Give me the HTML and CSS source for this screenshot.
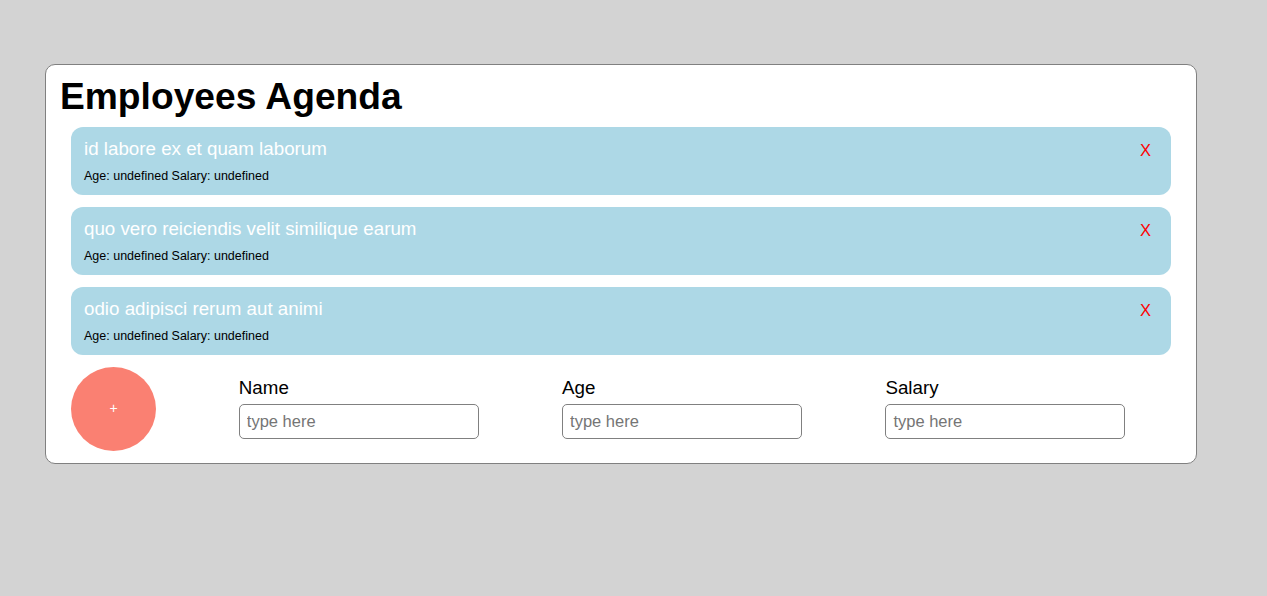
FILE: index.html
```html
<!DOCTYPE html>
<html>
<head>
<meta charset="utf-8">
<link rel="stylesheet" href="styles.css">
</head>
<body>
<div class="card">
  <h1 class="title">Employees Agenda</h1>
  <div class="list">
    <div class="item">
      <div class="info">
        <div class="name">id labore ex et quam laborum</div>
        <div class="meta">Age: undefined Salary: undefined</div>
      </div>
      <span class="remove">X</span>
    </div>
    <div class="item">
      <div class="info">
        <div class="name">quo vero reiciendis velit similique earum</div>
        <div class="meta">Age: undefined Salary: undefined</div>
      </div>
      <span class="remove">X</span>
    </div>
    <div class="item">
      <div class="info">
        <div class="name">odio adipisci rerum aut animi</div>
        <div class="meta">Age: undefined Salary: undefined</div>
      </div>
      <span class="remove">X</span>
    </div>
  </div>
  <div class="form">
    <button class="add">+</button>
    <label class="field"><span class="label">Name</span><input class="input" placeholder="type here"></label>
    <label class="field"><span class="label">Age</span><input class="input" placeholder="type here"></label>
    <label class="field"><span class="label">Salary</span><input class="input" placeholder="type here"></label>
  </div>
</div>
</body>
</html>
```

FILE: styles.css
```css
html, body {
  margin: 0;
  padding: 0;
}
body {
  background: #d3d3d3;
  font-family: "Liberation Sans", Arial, sans-serif;
  width: 1267px;
  height: 596px;
  padding-top: 64px;
  box-sizing: border-box;
}
.card {
  margin-left: 45px;
  width: 1152px;
  box-sizing: border-box;
  background: #fff;
  border: 1px solid #808080;
  border-radius: 10px;
  padding: 9px 25px 12px 25px;
}
.title {
  margin: 0 0 9px -11px;
  font-size: 37.2px;
  font-weight: bold;
  line-height: 44px;
  color: #000;
}
.list {
  display: flex;
  flex-direction: column;
  gap: 12px;
}
.item {
  background: #add8e6;
  border-radius: 12px;
  height: 68px;
  box-sizing: border-box;
  padding: 11px 20px 0 13px;
  display: flex;
  justify-content: space-between;
  align-items: flex-start;
}
.name {
  color: #fff;
  font-size: 18.75px;
  line-height: 22px;
}
.meta {
  margin-top: 9px;
  color: #000;
  font-size: 12.5px;
  line-height: 14px;
}
.remove {
  color: #ff0000;
  font-size: 16.5px;
  line-height: 19px;
  margin-top: 3px;
}
.form {
  margin-top: 12px;
  display: flex;
  align-items: flex-start;
  gap: 83.3px;
}
.add {
  width: 85px;
  height: 84px;
  border: none;
  border-radius: 50%;
  background: #fa8072;
  color: #fff;
  font-family: "Liberation Sans", Arial, sans-serif;
  font-size: 14px;
  padding: 0 0 3px 0;
  margin-right: -0.5px;
}
.field {
  display: flex;
  flex-direction: column;
  gap: 5px;
  margin-top: 10px;
}
.label {
  font-size: 18.75px;
  line-height: 22px;
  color: #000;
}
.input {
  width: 240px;
  height: 35px;
  box-sizing: border-box;
  border: 1px solid #808080;
  border-radius: 5px;
  padding: 0 7px;
  font-family: "Liberation Sans", Arial, sans-serif;
  font-size: 16.5px;
  background: #fff;
}
.input::placeholder {
  color: #757575;
}
```
